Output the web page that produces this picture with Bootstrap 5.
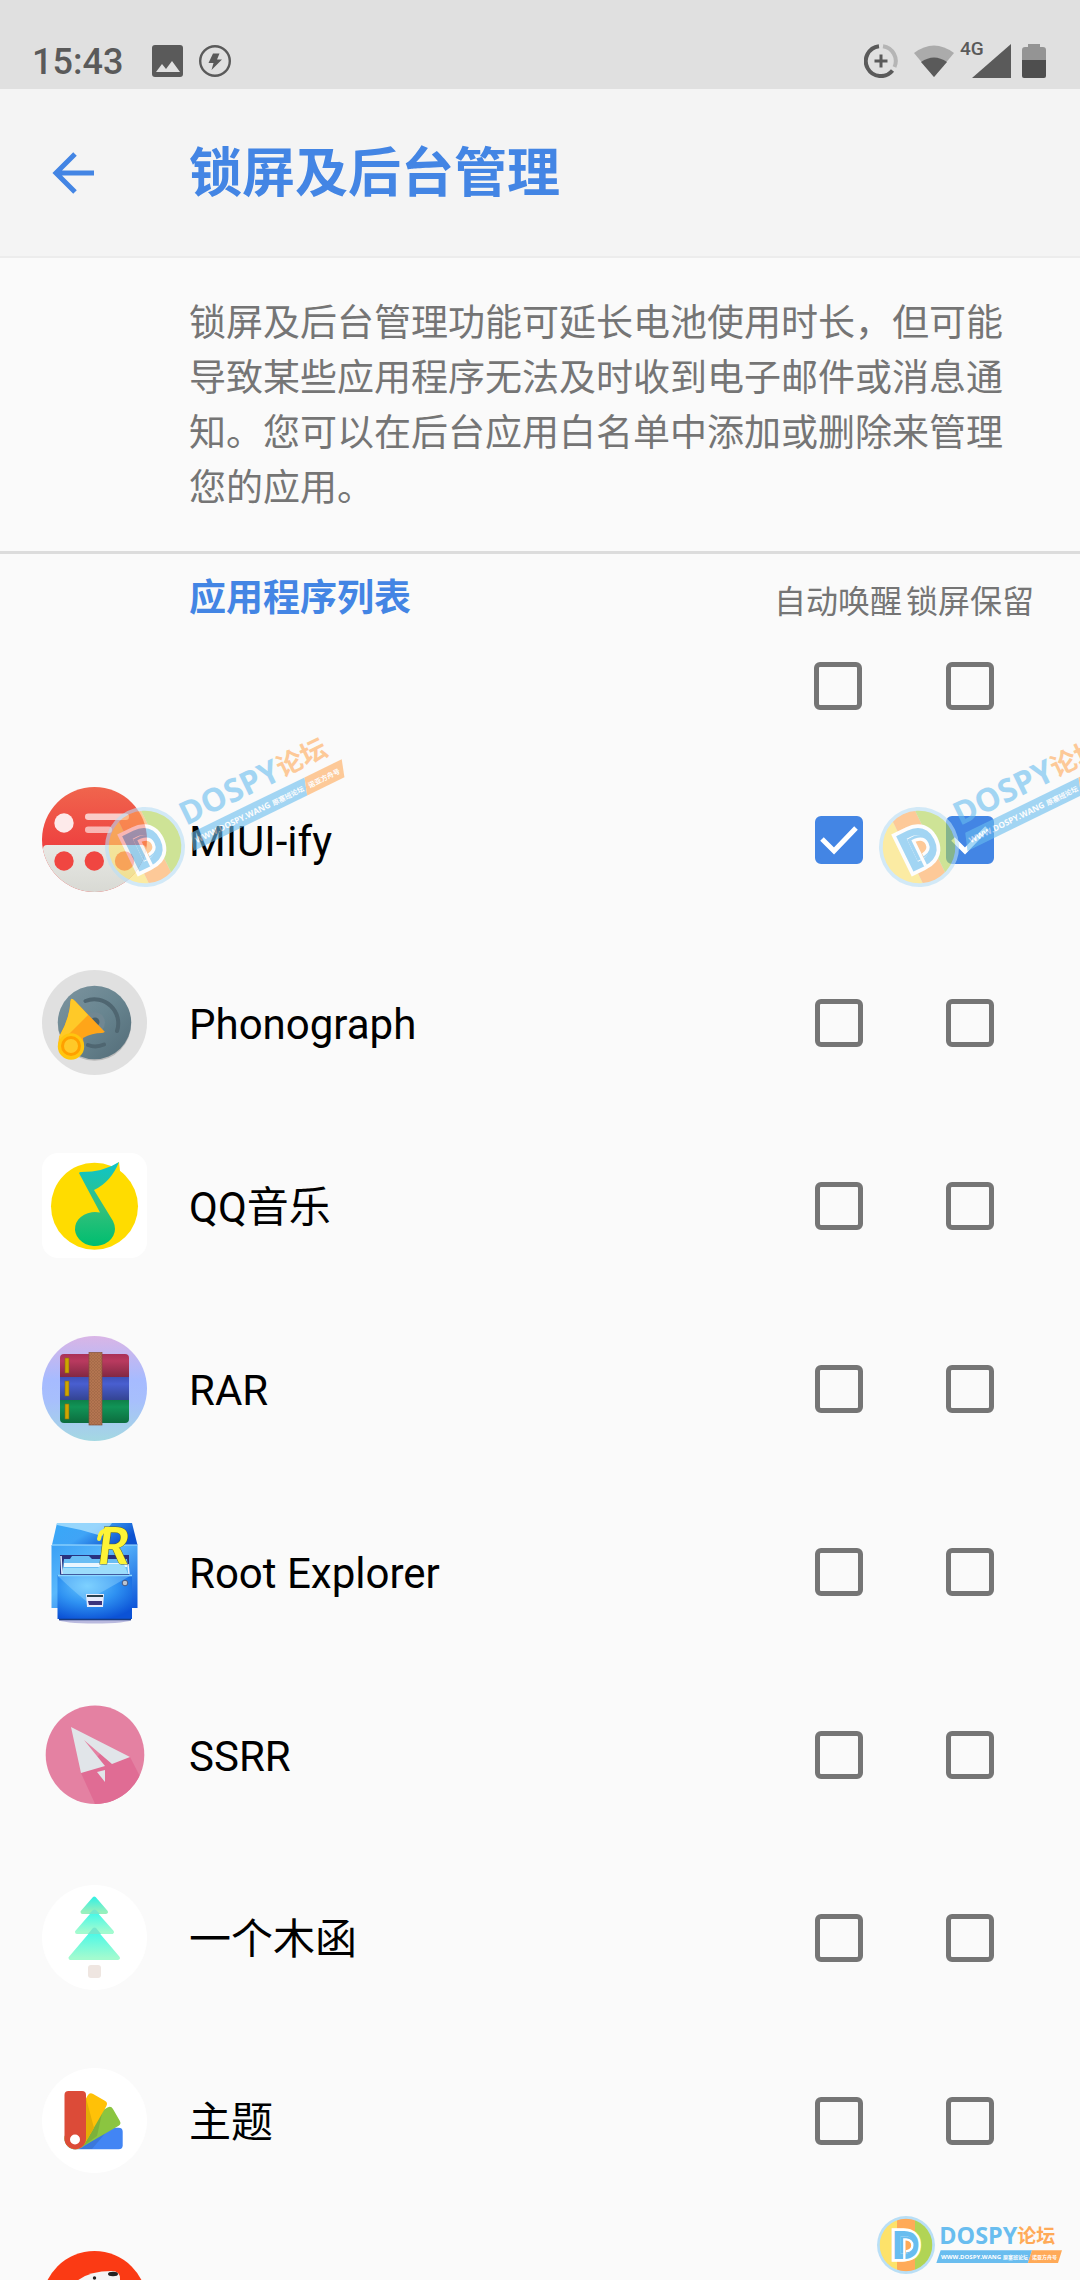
<!DOCTYPE html>
<html lang="zh-CN">
<head>
<meta charset="utf-8">
<meta name="viewport" content="width=device-width, initial-scale=1">
<title>锁屏及后台管理</title>
<link href="https://cdn.jsdelivr.net/npm/bootstrap@5.3.0/dist/css/bootstrap.min.css" rel="stylesheet">
<style>
  :root { --accent: #4385e4; --muted: #757575; --gutter: 189px; }
  body { font-family: Roboto, "Noto Sans CJK SC", sans-serif; background: #fafafa; color: #000; }
  .screen { height: 100vh; }
  .status-bar { height: 89px; padding: 32px 34px 0 32px; background: #e0e0e0; color: #5a5a5a; }
  .clock { font-size: 36px; line-height: 60px; font-weight: 500; width: 120px; }
  .status-icons { height: 58px; }
  .battery { margin-left: 11px; }
  .net-label { font-size: 19px; line-height: 20px; font-weight: 500; top: -5px; left: -10px; }
  .app-bar { height: 169px; background: #f4f4f4; border-bottom: 2px solid #ececec; }
  .back-btn { width: var(--gutter); padding-left: 49px; color: var(--accent); }
  .page-title { font-size: 53px; line-height: 64px; font-weight: 700; color: var(--accent); padding-top: 3px; }
  .intro { padding: 38px 70px 35px var(--gutter); font-size: 37px; line-height: 55px; color: var(--muted); border-bottom: 3px solid #dcdcdc; }
  .list-head { padding-right: 44px; padding-left: var(--gutter); height: 194px; }
  .list-title { font-size: 37px; line-height: 44px; font-weight: 700; color: var(--accent); margin-top: 23px; }
  .head-cell { width: 132px; padding-top: 24px; font-size: 32px; line-height: 48px; color: var(--muted); }
  .head-cell .form-check-input { margin-top: 36px; }
  .app-row { height: 183px; padding-right: 45px; padding-left: 42px; }
  .app-icon { width: 105px; height: 105px; margin-right: 42px; overflow: visible; }
  .app-name { font-size: 42px; line-height: 56px; padding-top: 4px; }
  .pick { width: 131px; padding-left: 42px; }
  .form-check-input.box { width: 48px; height: 48px; border: 5px solid var(--muted); border-radius: 6px; background-color: transparent; }
  .form-check-input.box:checked { border-color: var(--accent); background-color: var(--accent); background-origin: border-box; background-size: 48px 48px;
    background-image: url("data:image/svg+xml,%3csvg xmlns='http://www.w3.org/2000/svg' viewBox='0 0 48 48'%3e%3cpath fill='none' stroke='%23fff' stroke-width='5' d='M7 23L19 35L41 12'/%3e%3c/svg%3e"); }
  .stamp { pointer-events: none; }
  .stamp-tilt { width: 260px; height: 180px; top: 727px; opacity: .6; }
  .stamp-a { left: 95px; }
  .stamp-b { left: 869px; }
  .stamp-flat { width: 190px; height: 60px; right: 14px; bottom: 5px; }
  .latin-bold { font-family: "Open Sans", sans-serif; font-weight: 700; }
  .han-bold { font-family: "Noto Sans CJK SC", sans-serif; font-weight: 700; }
</style>
<script src="https://cdn.jsdelivr.net/npm/bootstrap@5.3.0/dist/js/bootstrap.bundle.min.js"></script>
</head>
<body>
<div class="screen position-relative overflow-hidden">

  <div class="status-bar d-flex align-items-start">
    <div class="clock">15:43</div>
    <div class="status-icons d-flex align-items-center flex-grow-1">
      <svg width="31" height="32" viewBox="0 0 31 32"><rect width="31" height="32" rx="3" fill="#5a5a5a"/><path d="M4 27L10 19L14 24L20 16L28 27Z" fill="#e0e0e0"/></svg>
      <svg class="ms-3" width="32" height="32" viewBox="0 0 32 32"><circle cx="16" cy="16" r="14.8" fill="none" stroke="#5a5a5a" stroke-width="2.4"/><path d="M14 8.500H20.500L18 14.500H23L12.500 25L14.500 18H9.500Z" fill="#5a5a5a"/></svg>
    </div>
    <div class="status-icons d-flex align-items-center">
      <svg width="34" height="34" viewBox="0 0 34 34" fill="none" stroke="#5a5a5a" stroke-width="4"><path d="M15 2.200A15 15 0 1 0 28.500 26.500"/><path d="M19 2.200A15 15 0 0 1 30.500 23" stroke="#b5b5b5"/><path d="M17 10.500V23.500M10.500 17H23.500" stroke-width="3"/></svg>
      <svg class="ms-3" width="40" height="32" viewBox="0 0 40 32"><path d="M0 8Q20 -7 40 8L20 32Z" fill="#ababab"/><path d="M7 17Q20 8 33 17L20 32Z" fill="#5a5a5a"/></svg>
      <div class="position-relative d-flex ms-3"><span class="net-label position-absolute">4G</span>
        <svg width="41" height="34" viewBox="0 0 41 34"><path d="M41 0V34H2Z" fill="#5a5a5a"/></svg></div>
      <svg class="battery" width="24" height="34" viewBox="0 0 24 34"><path d="M0 16V6Q0 3 3 3H6V0H18V3H21Q24 3 24 6V16Z" fill="#949494"/><path d="M0 16H24V32Q24 34 22 34H2Q0 34 0 32Z" fill="#4e4e4e"/></svg>
    </div>
  </div>

  <header class="app-bar d-flex align-items-center">
    <button type="button" class="back-btn btn border-0 text-start py-0 pe-0 flex-shrink-0" aria-label="返回">
      <svg width="50" height="50" viewBox="0 0 50 50" fill="none" stroke="currentColor" stroke-width="5"><path d="M45 25H8M26 6L7 25L26 44"/></svg>
    </button>
    <h1 class="page-title mb-0">锁屏及后台管理</h1>
  </header>

  <p class="intro mb-0">锁屏及后台管理功能可延长电池使用时长，但可能导致某些应用程序无法及时收到电子邮件或消息通知。您可以在后台应用白名单中添加或删除来管理您的应用。</p>

  <div class="list-head d-flex align-items-start">
    <h2 class="list-title mb-0 flex-grow-1">应用程序列表</h2>
    <label class="head-cell d-flex flex-column align-items-center text-nowrap">自动唤醒<input class="form-check-input box" type="checkbox"></label>
    <label class="head-cell d-flex flex-column align-items-center text-nowrap">锁屏保留<input class="form-check-input box" type="checkbox"></label>
  </div>

  <ul class="list-unstyled mb-0">
    <li class="app-row d-flex align-items-center">
      <svg class="app-icon flex-shrink-0" viewBox="0 0 105 105">
        <defs><linearGradient id="mr" x2="0" y2="1"><stop stop-color="#f0654d"/><stop offset=".6" stop-color="#ee3f3f"/></linearGradient><linearGradient id="mg" x2="0" y2="1"><stop stop-color="#e8e9e5"/><stop offset="1" stop-color="#d4d5cf"/></linearGradient><clipPath id="mc"><circle cx="52.5" cy="52.5" r="52.5"/></clipPath></defs>
        <g clip-path="url(#mc)"><rect width="105" height="105" fill="url(#mr)"/><rect x="1" y="58" width="103" height="60" rx="4" fill="url(#mg)"/></g>
        <g fill="#f04641"><circle cx="22" cy="74" r="9.700"/><circle cx="52.300" cy="74" r="9.700"/><circle cx="82.500" cy="74" r="9.700"/></g>
        <circle cx="22" cy="36" r="9.700" fill="#fdeaea"/><rect x="43" y="26.500" width="44" height="6.500" rx="3.200" fill="#fff" opacity=".7"/><rect x="43" y="39.500" width="27" height="6.500" rx="3.200" fill="#fff" opacity=".6"/>
      </svg>
      <span class="app-name flex-grow-1">MIUI-ify</span>
      <div class="pick d-flex"><input class="form-check-input box mt-0" type="checkbox" checked aria-label="MIUI-ify 自动唤醒"></div>
      <div class="pick d-flex"><input class="form-check-input box mt-0" type="checkbox" checked aria-label="MIUI-ify 锁屏保留"></div>
    </li>

    <li class="app-row d-flex align-items-center">
      <svg class="app-icon flex-shrink-0" viewBox="0 0 105 105">
        <defs><linearGradient id="pd" x2="1" y2="1"><stop stop-color="#7d949f"/><stop offset=".5" stop-color="#688590"/><stop offset="1" stop-color="#526b77"/></linearGradient></defs>
        <circle cx="52.500" cy="52.500" r="52.500" fill="#e0e0e0"/><circle cx="52.500" cy="54" r="36.700" fill="#bbb"/><circle cx="52.500" cy="52.500" r="36.700" fill="url(#pd)"/>
        <path d="M43.500 31A24 24 0 0 1 75 61M46 75Q54 78 62 74.500" fill="none" stroke="#4f6671" stroke-width="4" stroke-linecap="round"/>
        <circle cx="52.500" cy="52.500" r="10.500" fill="#708792"/><circle cx="53" cy="52" r="4.500" fill="#4a606a"/>
        <path d="M30 29Q29 28 33 31L62 61Q64 62 60 63Q50 63 41 68L42 77H16L17 67Q28 48 28.500 31Z" fill="#ffa518"/>
        <path d="M29 29Q30 28 33 31L46 45L18 73L17 67Q28 48 28.500 31Z" fill="#ffc928"/>
        <circle cx="29" cy="76.500" r="13.200" fill="#ffc60f"/><circle cx="29" cy="76" r="8.500" fill="#ffc928" stroke="#ffa000" stroke-width="3"/>
      </svg>
      <span class="app-name flex-grow-1">Phonograph</span>
      <div class="pick d-flex"><input class="form-check-input box mt-0" type="checkbox" aria-label="Phonograph 自动唤醒"></div>
      <div class="pick d-flex"><input class="form-check-input box mt-0" type="checkbox" aria-label="Phonograph 锁屏保留"></div>
    </li>

    <li class="app-row d-flex align-items-center">
      <svg class="app-icon flex-shrink-0" viewBox="0 0 105 105">
        <defs><linearGradient id="qn" x1="0" x2="0" y1="9" y2="92" gradientUnits="userSpaceOnUse"><stop stop-color="#0cc5cd"/><stop offset=".55" stop-color="#35c07c"/><stop offset="1" stop-color="#00be70"/></linearGradient></defs>
        <rect width="105" height="105" rx="16" fill="#fff"/><circle cx="52.500" cy="53.300" r="43.500" fill="#ffdc00"/><path d="M70 14L77 9L78 18L81 23Z" fill="#ffdc00"/>
        <path d="M37.500 21Q36 19.500 39 19Q62 19 77 9Q69 29 52 37L71 68Q73 72 73 76A20 17 0 1 1 58 59.500Z" fill="url(#qn)"/>
      </svg>
      <span class="app-name flex-grow-1">QQ音乐</span>
      <div class="pick d-flex"><input class="form-check-input box mt-0" type="checkbox" aria-label="QQ音乐 自动唤醒"></div>
      <div class="pick d-flex"><input class="form-check-input box mt-0" type="checkbox" aria-label="QQ音乐 锁屏保留"></div>
    </li>

    <li class="app-row d-flex align-items-center">
      <svg class="app-icon flex-shrink-0" viewBox="0 0 105 105">
        <defs><linearGradient id="rb" x2="0" y2="1"><stop stop-color="#d9b5e6"/><stop offset=".42" stop-color="#a6bbff"/><stop offset=".62" stop-color="#a7bffc"/><stop offset="1" stop-color="#a4d8e2"/></linearGradient>
        <linearGradient id="r1" x2="0" y2="1"><stop stop-color="#a83158"/><stop offset=".3" stop-color="#b93a5f"/><stop offset="1" stop-color="#822843"/></linearGradient><linearGradient id="r2" x2="0" y2="1"><stop stop-color="#3e51b8"/><stop offset=".3" stop-color="#495fd0"/><stop offset="1" stop-color="#344493"/></linearGradient><linearGradient id="r3" x2="0" y2="1"><stop stop-color="#0e8049"/><stop offset=".3" stop-color="#119457"/><stop offset="1" stop-color="#0c6c3e"/></linearGradient>
        <pattern id="rw" width="3" height="3" patternUnits="userSpaceOnUse"><rect width="3" height="3" fill="#a66b49"/><path d="M0 0L3 3M3 0L0 3" stroke="#ba7a55" stroke-width=".6"/></pattern><clipPath id="rc"><rect x="18" y="18" width="69" height="69" rx="4"/></clipPath></defs>
        <circle cx="52.500" cy="52.500" r="52.500" fill="url(#rb)"/>
        <g clip-path="url(#rc)"><rect x="18" y="18" width="69" height="23" fill="url(#r1)"/><rect x="18" y="41" width="69" height="23" fill="url(#r2)"/><rect x="18" y="64" width="69" height="23" fill="url(#r3)"/></g>
        <g fill="#cda600" stroke="#8a6a10" stroke-width=".6"><rect x="23" y="22" width="4" height="15"/><rect x="23" y="45" width="4" height="15"/><rect x="23" y="68" width="4" height="15"/></g>
        <rect x="47" y="16.500" width="13" height="72.500" fill="url(#rw)" stroke="#84523a" stroke-width=".7"/>
      </svg>
      <span class="app-name flex-grow-1">RAR</span>
      <div class="pick d-flex"><input class="form-check-input box mt-0" type="checkbox" aria-label="RAR 自动唤醒"></div>
      <div class="pick d-flex"><input class="form-check-input box mt-0" type="checkbox" aria-label="RAR 锁屏保留"></div>
    </li>

    <li class="app-row d-flex align-items-center">
      <svg class="app-icon flex-shrink-0" viewBox="0 0 105 105">
        <defs><linearGradient id="xa" x2="1" y2=".4"><stop stop-color="#38a8f8"/><stop offset=".5" stop-color="#3fa4f6"/><stop offset="1" stop-color="#0d52d0"/></linearGradient><linearGradient id="xb" x2="1" y2="1"><stop stop-color="#3aa0f5"/><stop offset=".4" stop-color="#5ab8fc"/><stop offset="1" stop-color="#0b53d8"/></linearGradient><radialGradient id="xc" cx=".4" cy=".25" r=".8"><stop stop-color="#66c8ff"/><stop offset=".5" stop-color="#2f92f2"/><stop offset="1" stop-color="#0b52d6"/></radialGradient></defs>
        <ellipse cx="53" cy="101" rx="36" ry="3.500" fill="#b9b9de"/>
        <path d="M15 4H90L95.500 26H10Z" fill="url(#xa)"/><path d="M15 4H70L60 17Q38 10 15 6Z" fill="#c8efff" opacity=".65"/>
        <rect x="9.500" y="26" width="86" height="63" fill="url(#xb)"/><path d="M10 26H95" stroke="#a8e2ff"/>
        <path d="M18 36H87V56H18Z" fill="#28317f"/><path d="M20 55L22 40H28L30 37H47L50 40H85L87 55Z" fill="#69bdf4"/><path d="M22 44H85V48H22Z" fill="#e9f6ff"/><path d="M21 49H56L60 45H82L86 55H20Z" fill="#9cdcfb"/><path d="M19 37L20 55M86 45L87 55" stroke="#e6efff" stroke-width="1.500"/>
        <path d="M15.500 56H90V100H15.500Z" fill="url(#xc)"/><path d="M16 57H88L44 82Q28 69 16 57Z" fill="#a9e3ff" opacity=".35"/><path d="M16 56.500H90" stroke="#8cd7ff" stroke-width="1.500"/><path d="M17 100.500H89" stroke="#173b80" stroke-width="1.500"/>
        <circle cx="83" cy="64" r="2.800" fill="#bcc4cf" stroke="#445a85" stroke-width="1"/>
        <path d="M44 75H62L61 88H45Z" fill="#e6ebfa"/><path d="M45 76H61V78H45Z" fill="#29414f"/><path d="M46 82H60V86H47Z" fill="#3c347b"/>
        <text x="56" y="45" font-family="Lato, sans-serif" font-style="italic" font-weight="700" font-size="52" fill="#fdf436" stroke="#56602b" stroke-width="1" paint-order="stroke">R</text>
        <path d="M68 10Q58 11 57 20" fill="none" stroke="#fdf436" stroke-width="4" stroke-linecap="round"/>
      </svg>
      <span class="app-name flex-grow-1">Root Explorer</span>
      <div class="pick d-flex"><input class="form-check-input box mt-0" type="checkbox" aria-label="Root Explorer 自动唤醒"></div>
      <div class="pick d-flex"><input class="form-check-input box mt-0" type="checkbox" aria-label="Root Explorer 锁屏保留"></div>
    </li>

    <li class="app-row d-flex align-items-center">
      <svg class="app-icon flex-shrink-0" viewBox="0 0 105 105">
        <defs><clipPath id="sc"><circle cx="53" cy="52.700" r="49.300"/></clipPath></defs>
        <circle cx="53" cy="52.700" r="49.300" fill="#e481a2"/><path clip-path="url(#sc)" d="M39 71L54 104H105V88L88 55L60 50Z" fill="#e06c94"/>
        <path d="M29 25L88 55L70 62L42 38L63 64L39 71Z" fill="#e1e5e9"/><path d="M55 70L63 68V80Z" fill="#e1e5e9"/>
      </svg>
      <span class="app-name flex-grow-1">SSRR</span>
      <div class="pick d-flex"><input class="form-check-input box mt-0" type="checkbox" aria-label="SSRR 自动唤醒"></div>
      <div class="pick d-flex"><input class="form-check-input box mt-0" type="checkbox" aria-label="SSRR 锁屏保留"></div>
    </li>

    <li class="app-row d-flex align-items-center">
      <svg class="app-icon flex-shrink-0" viewBox="0 0 105 105">
        <defs><linearGradient id="t1" x2="0" y2="1"><stop stop-color="#3cf0e0"/><stop offset="1" stop-color="#97f0bd"/></linearGradient><linearGradient id="t2" x2="0" y2="1"><stop stop-color="#40f8ea"/><stop offset="1" stop-color="#a3fbcf"/></linearGradient></defs>
        <circle cx="52.500" cy="52.500" r="52.500" fill="#fff"/>
        <g stroke-linejoin="round" stroke-width="4"><path d="M52.300 45L76 73H28.500Z" fill="url(#t2)" stroke="url(#t2)"/><path d="M52.300 27L70 47H35Z" fill="url(#t2)" stroke="url(#t2)"/><path d="M52.300 13.500L64 27H40.500Z" fill="url(#t1)" stroke="url(#t1)"/></g>
        <path d="M47 29L51 25Q52.500 24 54 25L58 29ZM46 49L51 43Q52.500 42 54 43L59 49Z" fill="#75e7cd"/>
        <rect x="46" y="80" width="13" height="13" rx="3" fill="#efe6e1"/>
      </svg>
      <span class="app-name flex-grow-1">一个木函</span>
      <div class="pick d-flex"><input class="form-check-input box mt-0" type="checkbox" aria-label="一个木函 自动唤醒"></div>
      <div class="pick d-flex"><input class="form-check-input box mt-0" type="checkbox" aria-label="一个木函 锁屏保留"></div>
    </li>

    <li class="app-row d-flex align-items-center">
      <svg class="app-icon flex-shrink-0" viewBox="0 0 105 105">
        <defs><path id="swatch" d="M22.500 27Q22.500 23 26.500 23H40Q44 23 44 27V70.500A10.750 10.750 0 0 1 22.500 70.500Z"/></defs>
        <circle cx="52.500" cy="52.500" r="52.500" fill="#fff"/>
        <use href="#swatch" fill="#4285f4" transform="rotate(90 33.200 70.500)"/><path d="M38 81L66 62L50 81Z" fill="#3b77db"/>
        <use href="#swatch" fill="#8bc540" transform="rotate(60 33.200 70.500)"/><path d="M40 79L61 41L55 68Z" fill="#7db13a"/>
        <use href="#swatch" fill="#ffc107" transform="rotate(30 33.200 70.500)"/><path d="M44 30L52 60L43 75Z" fill="#e5ad06"/>
        <use href="#swatch" fill="#dc4b38"/><circle cx="33" cy="71.500" r="5" fill="#fff"/>
      </svg>
      <span class="app-name flex-grow-1">主题</span>
      <div class="pick d-flex"><input class="form-check-input box mt-0" type="checkbox" aria-label="主题 自动唤醒"></div>
      <div class="pick d-flex"><input class="form-check-input box mt-0" type="checkbox" aria-label="主题 锁屏保留"></div>
    </li>

    <li class="app-row d-flex align-items-center">
      <svg class="app-icon flex-shrink-0" viewBox="0 0 105 105">
        <circle cx="52.500" cy="52.500" r="52.500" fill="#fb3a14"/><path d="M22 60Q24 20 70 20Q78 20 78 28V60Z" fill="#f4f4f4"/><ellipse cx="71" cy="23" rx="5" ry="2.200" fill="#222"/><circle cx="52.500" cy="27" r="1.700" fill="#222"/>
      </svg>
      <span class="app-name flex-grow-1"></span>
      <div class="pick d-flex"><input class="form-check-input box mt-0" type="checkbox" aria-label="自动唤醒"></div>
      <div class="pick d-flex"><input class="form-check-input box mt-0" type="checkbox" aria-label="锁屏保留"></div>
    </li>
  </ul>

  <!-- forum stamps floating over the list -->
  <svg class="stamp stamp-flat position-absolute" viewBox="-90 -90 570 180">
    <defs>
      <clipPath id="disc"><circle r="79"/></clipPath>
      <g id="forum">
        <circle r="87" fill="#b9dff6"/>
        <g clip-path="url(#disc)"><rect x="-80" y="-80" width="53" height="160" fill="#fde26a"/><rect x="-27" y="-80" width="54" height="160" fill="#ffaa58"/><rect x="27" y="-80" width="53" height="160" fill="#b1d455"/></g>
        <text class="latin-bold" x="-45" y="43" font-size="120" fill="#69bdef" stroke="#fff" stroke-width="16" paint-order="stroke">D</text>
        <path d="M-16 -26H2Q22 -22 22 0Q22 22 2 26H-16Z" fill="#69bdef"/>
        <path d="M-5 43V-17H0Q19 -15 19 1Q19 17 0 19" fill="#ffaa58" stroke="#fff" stroke-width="7"/>
        <text class="latin-bold" x="100" y="-2" font-size="70" fill="#69bdef">DOSPY</text>
        <text class="han-bold" x="334" y="-5" font-size="57" fill="#ffaa58">论坛</text>
        <path d="M104 16H378L366 54H91Z" fill="#69bdef"/><path d="M378 16H468L456 54H366Z" fill="#ffaa58"/>
        <text class="latin-bold" x="105" y="42" font-size="18" fill="#fff">WWW.DOSPY.WANG</text>
        <text class="han-bold" x="291" y="42" font-size="15" fill="#fff">原塞班论坛</text>
        <text class="han-bold" x="378" y="42" font-size="15" fill="#fff">诺亚方舟号</text>
      </g>
    </defs>
    <use href="#forum"/>
  </svg>
  <svg class="stamp stamp-tilt stamp-a position-absolute" viewBox="-50 -120 260 180"><use href="#forum" transform="rotate(-26) scale(.46)"/></svg>
  <svg class="stamp stamp-tilt stamp-b position-absolute" viewBox="-50 -120 260 180"><use href="#forum" transform="rotate(-26) scale(.46)"/></svg>
</div>
</body>
</html>
